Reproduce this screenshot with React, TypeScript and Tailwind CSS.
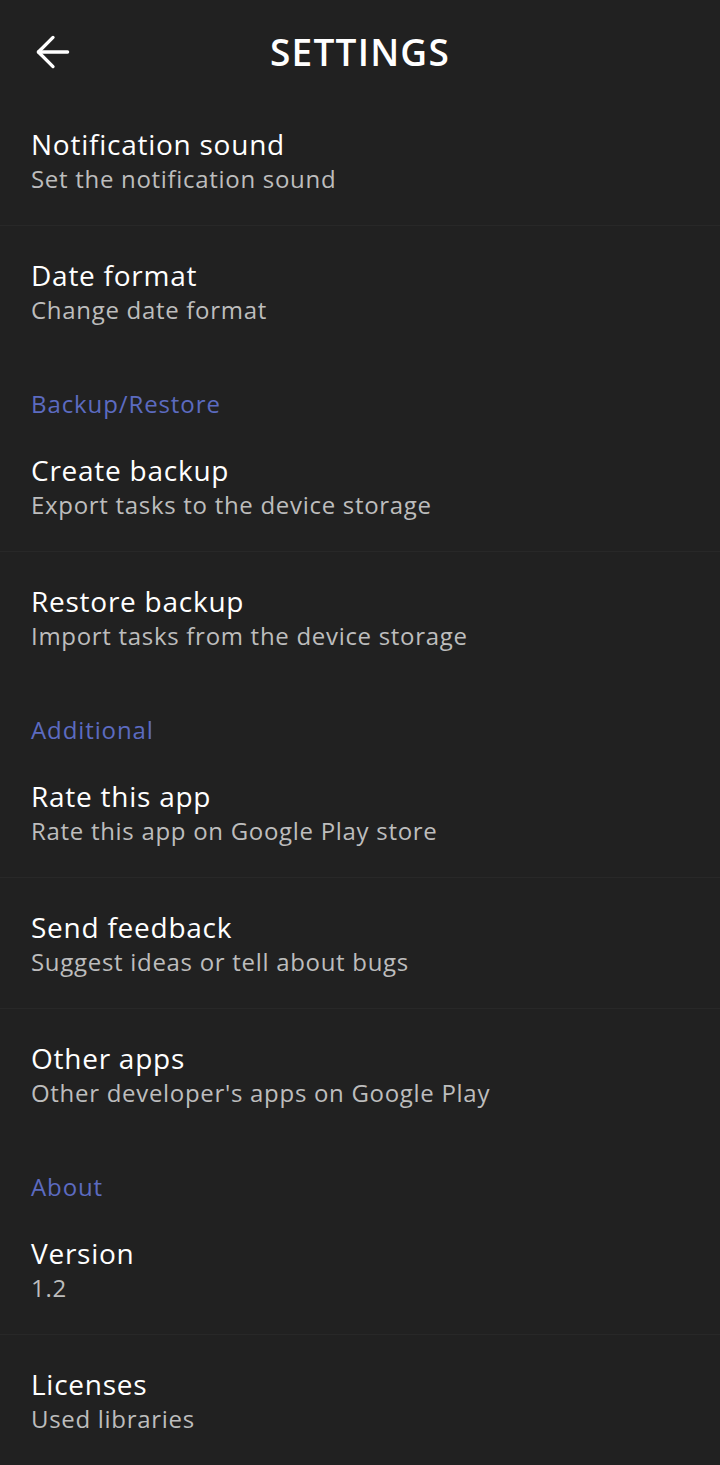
import { ArrowLeft } from "lucide-react";

type Item = { title: string; summary: string };
type Section = { label?: string; items: Item[] };

const sections: Section[] = [
  {
    items: [
      { title: "Notification sound", summary: "Set the notification sound" },
      { title: "Date format", summary: "Change date format" },
    ],
  },
  {
    label: "Backup/Restore",
    items: [
      { title: "Create backup", summary: "Export tasks to the device storage" },
      { title: "Restore backup", summary: "Import tasks from the device storage" },
    ],
  },
  {
    label: "Additional",
    items: [
      { title: "Rate this app", summary: "Rate this app on Google Play store" },
      { title: "Send feedback", summary: "Suggest ideas or tell about bugs" },
      { title: "Other apps", summary: "Other developer's apps on Google Play" },
    ],
  },
  {
    label: "About",
    items: [
      { title: "Version", summary: "1.2" },
      { title: "Licenses", summary: "Used libraries" },
    ],
  },
];

const Row = ({ item, divider }: { item: Item; divider: boolean }) => (
  <div
    className={`h-[131px] px-[31px] pt-[31px] ${
      divider ? "border-b border-[#282828]" : ""
    }`}
  >
    <div className="text-[28px] leading-[36px] tracking-[0.75px] text-white">{item.title}</div>
    <div className="text-[24px] leading-[34px] tracking-[0.7px] text-[#bdbdbd]">
      {item.summary}
    </div>
  </div>
);

export default function App() {
  return (
    <div className="min-h-[1465px] w-[720px] bg-[#212121] font-['Open_Sans',sans-serif] overflow-hidden">
      <header className="relative flex h-[95px] items-center justify-center pt-[8px]">
        <ArrowLeft
          className="absolute left-[28px] top-[27px] text-white"
          size={50}
          strokeWidth={1.6}
        />
        <h1 className="text-[37px] font-semibold tracking-[1.2px] text-white">SETTINGS</h1>
      </header>
      {sections.map((s, si) => (
        <section key={si}>
          {s.label && (
            <div className="h-[64px] px-[31px] pt-[32px] text-[24px] leading-[30px] tracking-[0.9px] text-[#5c6bc0]">
              {s.label}
            </div>
          )}
          {s.items.map((it, i) => (
            <Row key={it.title} item={it} divider={i < s.items.length - 1} />
          ))}
        </section>
      ))}
    </div>
  );
}
